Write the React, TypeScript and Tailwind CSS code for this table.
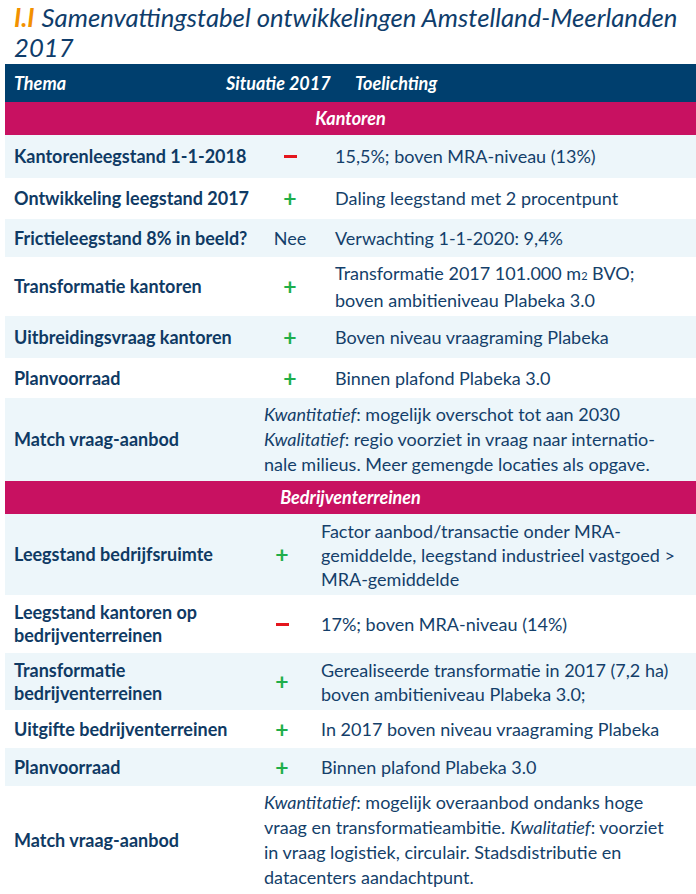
import React from "react";

const FONT = { fontFamily: "Lato, 'Open Sans', sans-serif" };

function Plus() {
  return <span className="text-[#1fae4b] font-bold text-[23px] leading-none">+</span>;
}
function Minus() {
  return <span className="block w-[13px] h-[3px] bg-[#e4161d]" aria-label="−" />;
}

type Row = {
  h: string;
  bg: string;
  thema: React.ReactNode;
  sit?: React.ReactNode;
  toel: React.ReactNode;
  merged?: boolean;
};

const light = "bg-[#edf6fa]";
const white = "bg-white";

const sec1: Row[] = [
  { h: "h-[43px]", bg: light, thema: "Kantorenleegstand 1-1-2018", sit: <Minus />, toel: "15,5%; boven MRA-niveau (13%)" },
  { h: "h-[41px]", bg: white, thema: "Ontwikkeling leegstand 2017", sit: <Plus />, toel: "Daling leegstand met 2 procentpunt" },
  { h: "h-[38px]", bg: light, thema: "Frictieleegstand 8% in beeld?", sit: <span>Nee</span>, toel: "Verwachting 1-1-2020: 9,4%" },
  {
    h: "h-[59px]",
    bg: white,
    thema: "Transformatie kantoren",
    sit: <Plus />,
    toel: (
      <>
        Transformatie 2017 101.000 m<span className="text-[11px] align-baseline">2</span> BVO;
        <br />
        boven ambitieniveau Plabeka 3.0
      </>
    ),
  },
  { h: "h-[42px]", bg: light, thema: "Uitbreidingsvraag kantoren", sit: <Plus />, toel: "Boven niveau vraagraming Plabeka" },
  { h: "h-[40px]", bg: white, thema: "Planvoorraad", sit: <Plus />, toel: "Binnen plafond Plabeka 3.0" },
  {
    h: "h-[83px]",
    bg: light,
    thema: "Match vraag-aanbod",
    merged: true,
    toel: (
      <>
        <i>Kwantitatief</i>: mogelijk overschot tot aan 2030
        <br />
        <i>Kwalitatief</i>: regio voorziet in vraag naar internatio-
        <br />
        nale milieus. Meer gemengde locaties als opgave.
      </>
    ),
  },
];

const sec2: Row[] = [
  {
    h: "h-[81px]",
    bg: light,
    thema: "Leegstand bedrijfsruimte",
    sit: <Plus />,
    toel: (
      <>
        Factor aanbod/transactie onder MRA-
        <br />
        gemiddelde, leegstand industrieel vastgoed &gt;
        <br />
        MRA-gemiddelde
      </>
    ),
  },
  {
    h: "h-[58px]",
    bg: white,
    thema: (
      <>
        Leegstand kantoren op
        <br />
        bedrijventerreinen
      </>
    ),
    sit: <Minus />,
    toel: "17%; boven MRA-niveau (14%)",
  },
  {
    h: "h-[57px]",
    bg: light,
    thema: (
      <>
        Transformatie
        <br />
        bedrijventerreinen
      </>
    ),
    sit: <Plus />,
    toel: (
      <>
        Gerealiseerde transformatie in 2017 (7,2 ha)
        <br />
        boven ambitieniveau Plabeka 3.0;
      </>
    ),
  },
  { h: "h-[38px]", bg: white, thema: "Uitgifte bedrijventerreinen", sit: <Plus />, toel: "In 2017 boven niveau vraagraming Plabeka" },
  { h: "h-[38px]", bg: light, thema: "Planvoorraad", sit: <Plus />, toel: "Binnen plafond Plabeka 3.0" },
  {
    h: "h-[108px]",
    bg: white,
    thema: "Match vraag-aanbod",
    merged: true,
    toel: (
      <>
        <i>Kwantitatief</i>: mogelijk overaanbod ondanks hoge
        <br />
        vraag en transformatieambitie. <i>Kwalitatief</i>: voorziet
        <br />
        in vraag logistiek, circulair. Stadsdistributie en
        <br />
        datacenters aandachtpunt.
      </>
    ),
  },
];

function TableRow({ r, second }: { r: Row; second: boolean }) {
  return (
    <div className={`flex items-center ${r.h} ${r.bg}`}>
      <div className={`${r.merged ? "w-[254px]" : second ? "w-[246px]" : "w-[254px]"} shrink-0 pl-[9px] font-bold leading-[23px] text-[#0f3a64]`}>
        {r.thema}
      </div>
      {r.merged ? (
        <div className="pl-[5px] leading-[25px]">{r.toel}</div>
      ) : (
        <>
          <div className="w-[62px] shrink-0 flex justify-center items-center">{r.sit}</div>
          <div className={`${second ? "pl-[8px] leading-[24px]" : "pl-[14px] leading-[25px]"}`}>{r.toel}</div>
        </>
      )}
    </div>
  );
}

export default function App() {
  return (
    <div className="w-[696px] h-[894px] bg-white overflow-hidden text-[#143f6a] text-[18px]" style={FONT}>
      <div className="pl-[14px] pt-[2px] pr-[4px] h-[64px] text-[25.7px] leading-[30px] italic text-[#0f3d6b]">
        <span className="inline-block text-[#f29100] font-bold pr-[7px]">I.I</span>Samenvattingstabel ontwikkelingen Amstelland-Meerlanden 2017
      </div>
      <div className="ml-[5px]">
        <div className="flex items-center h-[38px] bg-[#003f6e] text-white font-bold italic">
          <div className="w-[221px] shrink-0 pl-[9px]">Thema</div>
          <div className="w-[129px] shrink-0">Situatie 2017</div>
          <div>Toelichting</div>
        </div>
        <div className="flex items-center justify-center h-[33px] bg-[#c81161] text-white font-bold italic">Kantoren</div>
        {sec1.map((r, i) => (
          <TableRow key={i} r={r} second={false} />
        ))}
        <div className="flex items-center justify-center h-[33px] bg-[#c81161] text-white font-bold italic">Bedrijventerreinen</div>
        {sec2.map((r, i) => (
          <TableRow key={i} r={r} second={true} />
        ))}
      </div>
    </div>
  );
}
